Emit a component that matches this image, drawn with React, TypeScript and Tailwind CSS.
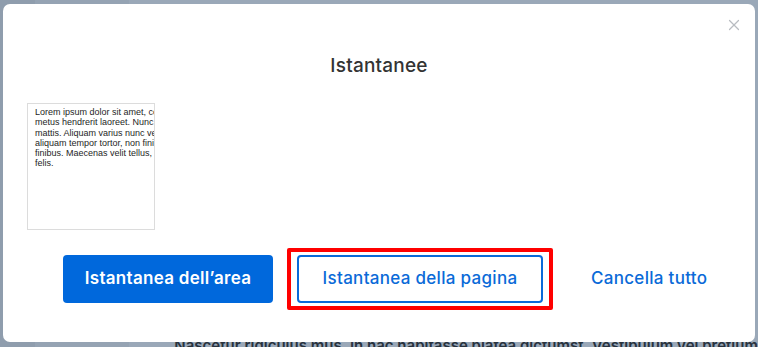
import { X } from "lucide-react"

const previewLines = [
  "Lorem ipsum dolor sit amet, consectetur adipiscing elit. Donec",
  "metus hendrerit laoreet. Nunc vel lorem sed",
  "mattis. Aliquam varius nunc vel magna",
  "aliquam tempor tortor, non finibus augue",
  "finibus. Maecenas velit tellus, pretium at",
  "felis.",
]

function SnapshotThumb() {
  return (
    <div className="h-[127px] w-[128px] overflow-hidden border border-[#dcdcdc] bg-white pl-[7px] pt-[3px]">
      <div className="font-['Liberation_Sans',Arial,sans-serif] text-[9px] leading-[10.3px] text-[#1e1e1e]">
        {previewLines.map((line) => (
          <div key={line} className="whitespace-nowrap">
            {line}
          </div>
        ))}
      </div>
    </div>
  )
}

export default function App() {
  return (
    <div className="relative h-[347px] w-[758px] overflow-hidden bg-[#9aa8b8] font-['Inter',sans-serif]">
      {/* page behind the overlay */}
      <div className="flex h-full">
        <div className="h-full w-[35px] bg-[#8f9dad]" />
        <div className="h-full w-[95px] bg-[#95a3b3]" />
        <div className="flex flex-1 flex-col justify-end">
          <p className="ml-[45px] translate-y-[10px] whitespace-nowrap text-[15px] font-semibold text-[#28323d]">
            Nascetur ridiculus mus. In hac habitasse platea dictumst. Vestibulum vel pretium
          </p>
        </div>
      </div>

      {/* modal */}
      <div className="absolute left-[3px] top-[4px] flex h-[338px] w-[752px] flex-col rounded-[7px] bg-white">
        <button className="absolute right-[12px] top-[12px] text-[#b9bcc1]">
          <X size={18} strokeWidth={1.6} />
        </button>

        <h2 className="pt-[48px] text-center text-[19px] font-medium leading-[28px] tracking-[0.2px] text-[#333333]">
          Istantanee
        </h2>

        <div className="ml-[24px] mt-[23px]">
          <SnapshotThumb />
        </div>

        <div className="mt-[18px] flex items-center">
          <button className="ml-[60px] h-[48px] w-[210px] rounded-[4px] bg-[#0068dc] text-[17px] font-semibold tracking-[0.3px] text-white">
            Istantanea dell’area
          </button>
          <div className="ml-[14px] rounded-[2px] border-4 border-[#ff0000] px-[6px] py-[3px]">
            <button className="h-[48px] w-[246px] rounded-[4px] border-2 border-[#0a6ad8] bg-white text-[17px] font-medium tracking-[0.3px] text-[#0a6ad8]">
              Istantanea della pagina
            </button>
          </div>
          <button className="ml-[12px] h-[48px] px-[26px] text-[17px] font-medium tracking-[0.3px] text-[#0a6ad8]">
            Cancella tutto
          </button>
        </div>
      </div>
    </div>
  )
}
